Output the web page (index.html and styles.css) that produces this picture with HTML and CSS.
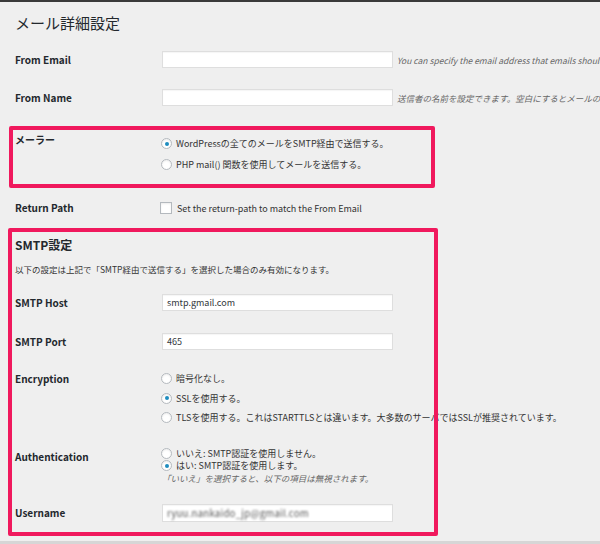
FILE: index.html
```html
<!DOCTYPE html>
<html lang="ja">
<head>
<meta charset="utf-8">
<title>メール詳細設定</title>
<link rel="stylesheet" href="styles.css">
</head>
<body>
<div class="wrap">
  <h1 class="title">メール詳細設定</h1>

  <div class="row r-email">
    <div class="label">From Email</div>
    <div class="field">
      <span class="input"></span>
      <span class="desc">You can specify the email address that emails should be sent from.</span>
    </div>
  </div>

  <div class="row r-name">
    <div class="label">From Name</div>
    <div class="field">
      <span class="input"></span>
      <span class="desc">送信者の名前を設定できます。空白にするとメールの送信者名はWordPressになります。</span>
    </div>
  </div>

  <section class="box box-mailer">
    <div class="row top">
      <div class="label">メーラー</div>
      <div class="options opts-mailer">
        <div class="opt"><span class="radio checked"></span>WordPressの全てのメールをSMTP経由で送信する。</div>
        <div class="opt"><span class="radio"></span>PHP mail() 関数を使用してメールを送信する。</div>
      </div>
    </div>
  </section>

  <div class="row r-return">
    <div class="label">Return Path</div>
    <div class="opt"><span class="check"></span>Set the return-path to match the From Email</div>
  </div>

  <section class="box box-smtp">
    <h2 class="smtp-title">SMTP設定</h2>
    <p class="note">以下の設定は上記で「SMTP経由で送信する」を選択した場合のみ有効になります。</p>

    <div class="row r-host">
      <div class="label">SMTP Host</div>
      <div class="field"><span class="input">smtp.gmail.com</span></div>
    </div>

    <div class="row r-port">
      <div class="label">SMTP Port</div>
      <div class="field"><span class="input">465</span></div>
    </div>

    <div class="row top r-enc">
      <div class="label tall">Encryption</div>
      <div class="options opts-enc">
        <div class="opt"><span class="radio"></span>暗号化なし。</div>
        <div class="opt"><span class="radio checked"></span>SSLを使用する。</div>
        <div class="opt"><span class="radio"></span>TLSを使用する。これはSTARTTLSとは違います。大多数のサーバではSSLが推奨されています。</div>
      </div>
    </div>

    <div class="row top r-auth">
      <div class="label tall">Authentication</div>
      <div class="options opts-auth">
        <div class="opt"><span class="radio"></span>いいえ: SMTP認証を使用しません。</div>
        <div class="opt"><span class="radio checked"></span>はい: SMTP認証を使用します。</div>
        <div class="hint">「いいえ」を選択すると、以下の項目は無視されます。</div>
      </div>
    </div>

    <div class="row r-user">
      <div class="label">Username</div>
      <div class="field"><span class="input user"><span class="blur">ryuu.nankaido_jp@gmail.com</span></span></div>
    </div>
  </section>
</div>
<div class="footer"></div>
</body>
</html>
```

FILE: styles.css
```css
html, body {
  margin: 0;
  padding: 0;
}
body {
  width: 600px;
  height: 544px;
  overflow: hidden;
  background: #efefef;
  border-top: 2px solid #3a3a3a;
  box-sizing: border-box;
  font-family: "Noto Sans CJK JP", "Liberation Sans", sans-serif;
  color: #32373c;
}
.wrap {
  padding-left: 15px;
}
.title {
  margin: 0;
  padding-top: 12px;
  font-size: 15px;
  line-height: 18px;
  font-weight: normal;
  color: #23282d;
}
.row {
  display: flex;
  align-items: center;
  white-space: nowrap;
}
.row.top {
  align-items: flex-start;
}
.label {
  width: 147px;
  flex: none;
  font-size: 10px;
  line-height: 14px;
  font-weight: bold;
  color: #23282d;
}
.label.tall {
  line-height: 20px;
}
.field {
  display: flex;
  align-items: center;
  flex: none;
}
.input {
  display: flex;
  align-items: center;
  width: 231px;
  height: 17px;
  box-sizing: border-box;
  padding-left: 4px;
  border: 1px solid #dedede;
  background: #fff;
  box-shadow: inset 0 1px 1px rgba(0,0,0,0.04);
  font-size: 9px;
  color: #32373c;
  flex: none;
}
.input.user {
  height: 18px;
}
.blur {
  filter: blur(1.1px);
  color: #555;
  font-size: 9.5px;
  letter-spacing: 0.3px;
}
.desc {
  flex: none;
  margin-left: 4px;
  font-size: 8.5px;
  font-style: italic;
  color: #666;
}
.r-email { margin-top: 19px; }
.r-name { margin-top: 21px; }

.box {
  position: relative;
}
.box::after {
  content: "";
  position: absolute;
  top: 0;
  height: 100%;
  box-sizing: border-box;
  border: 4px solid #f0195d;
  border-radius: 2px;
  pointer-events: none;
}
.box-mailer {
  margin-top: 20px;
  height: 62px;
  box-sizing: border-box;
  padding-top: 7px;
}
.box-mailer::after {
  left: -6px;
  width: 426px;
}
.options {
  display: flex;
  flex-direction: column;
}
.opt {
  display: flex;
  align-items: center;
  font-size: 9px;
  color: #333;
  white-space: nowrap;
}
.opts-mailer .opt { height: 21px; }
.opts-enc .opt { height: 19.5px; }
.opts-auth .opt { height: 12.5px; }
.radio {
  flex: none;
  position: relative;
  width: 11px;
  height: 11px;
  box-sizing: border-box;
  margin-left: -1px;
  margin-right: 4px;
  border: 1px solid #b4b9be;
  border-radius: 50%;
  background: #fff;
  box-shadow: inset 0 1px 2px rgba(0,0,0,0.08);
}
.radio.checked::before {
  content: "";
  position: absolute;
  left: 2.5px;
  top: 2.5px;
  width: 4px;
  height: 4px;
  border-radius: 50%;
  background: #1e8cbe;
}
.check {
  flex: none;
  width: 12px;
  height: 12px;
  box-sizing: border-box;
  margin-left: -2px;
  margin-right: 5px;
  border: 1px solid #b4b9be;
  background: #fff;
  box-shadow: inset 0 1px 2px rgba(0,0,0,0.08);
}
.r-return {
  margin-top: 13px;
}
.box-smtp {
  margin-top: 13px;
  padding-top: 9px;
  padding-bottom: 14px;
}
.box-smtp::after {
  left: -7px;
  width: 430px;
}
.smtp-title {
  margin: 0;
  font-size: 12px;
  line-height: 16px;
  font-weight: bold;
  color: #23282d;
}
.note {
  margin: 10px 0 0;
  font-size: 8.5px;
  line-height: 12px;
  color: #333;
}
.r-host { margin-top: 19px; }
.r-port { margin-top: 22px; }
.r-enc { margin-top: 19px; }
.r-auth { margin-top: 19.5px; }
.r-user { margin-top: 19.5px; }
.hint {
  height: 12.5px;
  line-height: 12.5px;
  font-size: 8.5px;
  font-style: italic;
  color: #666;
}
.footer {
  margin-top: 5px;
  height: 10px;
  background: #d6d6d6;
}
```
